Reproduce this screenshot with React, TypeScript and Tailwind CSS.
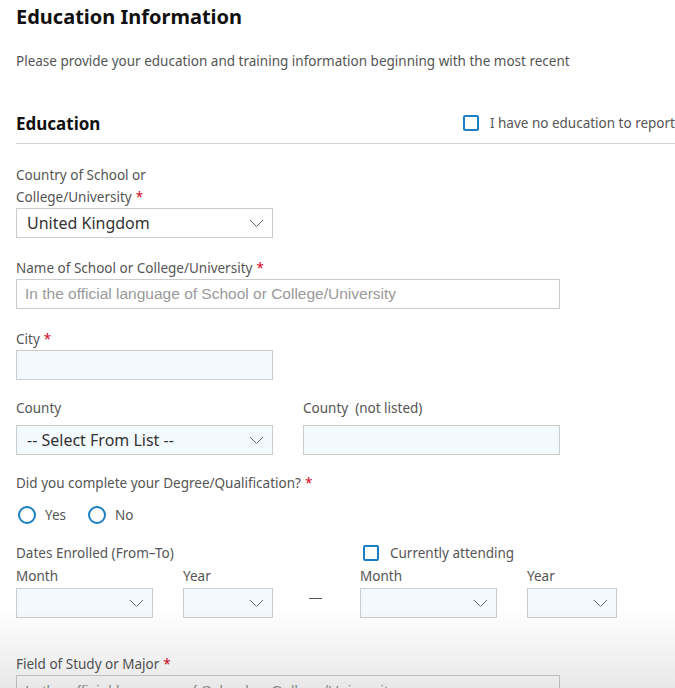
import React from 'react'

const font = { fontFamily: '"Noto Sans", "Open Sans", sans-serif' }

function Chevron() {
  return (
    <svg width="15" height="9" viewBox="0 0 15 9" className="shrink-0">
      <path d="M1 1 L7.5 7.5 L14 1" fill="none" stroke="#666" strokeWidth="1" />
    </svg>
  )
}

function Req() {
  return <span className="text-[#d0021b] ml-1">*</span>
}

function Label({ children, required }: { children: React.ReactNode; required?: boolean }) {
  return (
    <div className="text-[13.5px] leading-[22px] text-[#555] whitespace-nowrap">
      {children}
      {required && <Req />}
    </div>
  )
}

function Select({ value, width, tint }: { value?: string; width: string; tint?: boolean }) {
  return (
    <div
      className={`${width} h-[30px] border border-[#ccc] flex items-center justify-between pl-[10px] pr-[8px] ${
        tint ? 'bg-[#f3fafd]' : 'bg-white'
      }`}
    >
      <span className="text-[16px] text-[#333]">{value}</span>
      <Chevron />
    </div>
  )
}

function Input({ width, placeholder, tint }: { width: string; placeholder?: string; tint?: boolean }) {
  return (
    <div
      className={`${width} h-[30px] border border-[#ccc] flex items-center px-[8px] ${tint ? 'bg-[#f3fafd]' : 'bg-white'}`}
    >
      {placeholder && (
        <span
          className="text-[15.5px] text-[#999] whitespace-nowrap"
          style={{ fontFamily: '"Liberation Sans", Arial, sans-serif' }}
        >
          {placeholder}
        </span>
      )}
    </div>
  )
}

function Checkbox() {
  return <span className="inline-block w-4 h-4 border-2 border-[#1a7fc4] rounded-[2px] shrink-0" />
}

function Radio({ label }: { label: string }) {
  return (
    <label className="flex items-center gap-[9px]">
      <span className="w-[18px] h-[18px] rounded-full border-2 border-[#1a7fc4]" />
      <span className="text-[13.5px] text-[#555]">{label}</span>
    </label>
  )
}

export default function App() {
  return (
    <div className="relative h-[688px] w-[675px] overflow-hidden bg-white" style={font}>
      <div className="pl-4">
        <h1 className="text-[20px] font-bold text-[#111] leading-[28px] mt-[3px]">Education Information</h1>
        <p className="text-[13.5px] text-[#555] mt-[20px] leading-[20px] whitespace-nowrap">
          Please provide your education and training information beginning with the most recent
        </p>

        <div className="mt-[41px] flex items-end justify-between border-b border-[#d4d4d4] pb-[7px]">
          <h2 className="text-[17px] font-bold text-[#111] leading-[24px]">Education</h2>
          <div className="flex items-center gap-[11px] mb-[3px] whitespace-nowrap">
            <Checkbox />
            <span className="text-[13.5px] text-[#555]">I have no education to report</span>
          </div>
        </div>

        <div className="mt-[20px]">
          <Label>Country of School or</Label>
          <Label required>College/University</Label>
          <Select value="United Kingdom" width="w-[257px]" />
        </div>

        <div className="mt-[19px]">
          <Label required>Name of School or College/University</Label>
          <Input width="w-[544px]" placeholder="In the official language of School or College/University" />
        </div>

        <div className="mt-[19px]">
          <Label required>City</Label>
          <Input width="w-[257px]" tint />
        </div>

        <div className="mt-[17px] flex gap-[30px]">
          <div>
            <div className="mb-[6px]">
              <Label>County</Label>
            </div>
            <Select value="-- Select From List --" width="w-[257px]" tint />
          </div>
          <div>
            <div className="mb-[6px]">
              <Label>County&nbsp; (not listed)</Label>
            </div>
            <Input width="w-[257px]" tint />
          </div>
        </div>

        <div className="mt-[17px]">
          <Label required>Did you complete your Degree/Qualification?</Label>
          <div className="flex gap-[22px] mt-[11px] pl-[2px]">
            <Radio label="Yes" />
            <Radio label="No" />
          </div>
        </div>

        <div className="mt-[17px] flex items-end">
          <div>
            <Label>Dates Enrolled (From–To)</Label>
            <div className="flex gap-[30px] mt-px">
              <div>
                <Label>Month</Label>
                <div className="mt-px">
                  <Select width="w-[137px]" tint />
                </div>
              </div>
              <div>
                <Label>Year</Label>
                <div className="mt-px">
                  <Select width="w-[90px]" tint />
                </div>
              </div>
            </div>
          </div>
          <div className="w-[87px] flex justify-center self-end mb-[19px]">
            <span className="w-[13px] h-px bg-[#555] mr-[2px]" />
          </div>
          <div>
            <div className="flex items-center gap-[11px] h-[22px] pl-[3px]">
              <Checkbox />
              <span className="text-[13.5px] text-[#555]">Currently attending</span>
            </div>
            <div className="flex gap-[30px] mt-px">
              <div>
                <Label>Month</Label>
                <div className="mt-px">
                  <Select width="w-[137px]" tint />
                </div>
              </div>
              <div>
                <Label>Year</Label>
                <div className="mt-px">
                  <Select width="w-[90px]" tint />
                </div>
              </div>
            </div>
          </div>
        </div>

        <div className="mt-[35px]">
          <Label required>Field of Study or Major</Label>
          <Input width="w-[544px]" placeholder="In the official language of School or College/University" />
        </div>
      </div>
      <div className="pointer-events-none absolute inset-x-0 bottom-0 h-[80px] bg-linear-to-b from-black/0 to-black/[0.09]" />
    </div>
  )
}
